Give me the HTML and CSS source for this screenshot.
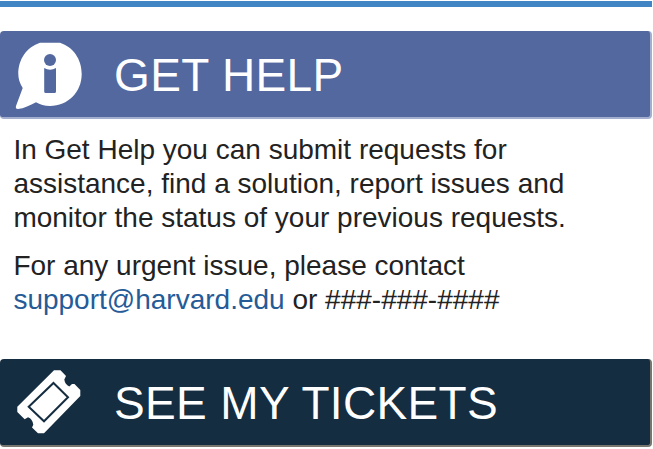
FILE: index.html
```html
<!DOCTYPE html>
<html lang="en">
<head>
<meta charset="utf-8">
<title>Get Help</title>
<link rel="stylesheet" href="styles.css">
</head>
<body>
<div class="topbar"></div>
<main>
  <a class="banner banner-help">
    <svg class="icon" viewBox="0 0 80 87" aria-hidden="true">
      <path fill="#fff" d="M40 11.800H60C73 16 81.700 28 81.700 43C81.700 61 68 75 50 75C44.500 75 40 73.500 36 71.300C30 74.500 24 77.500 18 78C16 78 15.500 77 16 75L22.700 57C19.500 52 18.300 47 18.300 43C18.300 28 27 16 40 11.800Z"/>
      <circle class="cut" cx="50" cy="29" r="6"/>
      <path class="cut" d="M44.200 40V37Q50 40.500 56 37V60.500Q56 62 54.500 62H45.700Q44.200 62 44.200 60.500Z"/>
    </svg>
    <span class="label">GET HELP</span>
  </a>
  <section class="copy">
    <p>In Get Help you can submit requests for<br>assistance, find a solution, report issues and<br>monitor the status of your previous requests.</p>
    <p>For any urgent issue, please contact<br><a class="mail" href="mailto:support@harvard.edu">support@harvard.edu</a> or ###-###-####</p>
  </section>
  <a class="banner banner-tickets">
    <svg class="icon" viewBox="0 0 80 87" aria-hidden="true">
      <path fill="#fff" d="M54 11.200H60.500L66 17L64.300 20.500Q65 25.500 69.300 27.500L72 25H74.500L80.300 31V37L44 74.300H38L32 68.500L33.300 65.700Q32.500 60 28 58.300L24.700 60.300L17.300 53V47.700Z"/>
      <path class="line" d="M53.500 24L68 38.300L44 62.300L28.700 47.700Z"/>
    </svg>
    <span class="label label-tickets">SEE MY TICKETS</span>
  </a>
</main>
</body>
</html>
```
FILE: styles.css
```css
* { box-sizing: border-box; }
body {
  margin: 0;
  padding-top: 1px;
  background: #fff;
  color: #222;
  font-family: "Liberation Sans", Arial, sans-serif;
  overflow: hidden;
}
.topbar { height: 6px; width: 652px; background: #4285c4; }
main { padding-top: 24px; }
.banner {
  display: flex;
  align-items: flex-start;
  width: 652px;
  height: 88px;
  border-radius: 4px;
  border-right: 2px solid;
  border-bottom: 2px solid;
  color: #fff;
}
.banner-help { background: #52689f; border-color: #a4afd0; }
.banner-tickets { background: #152d40; border-color: #77766f; }
.icon { display: block; flex: none; width: 80px; height: 87px; overflow: visible; }
.cut { fill: #52689f; }
.line { fill: none; stroke: #152d40; stroke-width: 2; }
.label {
  margin-left: 34px;
  font-size: 46px;
  line-height: 89px;
  letter-spacing: 0.35px;
  white-space: nowrap;
}
.label-tickets { letter-spacing: 0.35px; }
.copy {
  height: 240px;
  padding: 14px 0 0 13.4px;
  font-size: 28px;
  line-height: 34px;
  white-space: nowrap;
}
.copy p { margin: 0 0 14px; }
.mail { color: #255b97; text-decoration: none; }
```
